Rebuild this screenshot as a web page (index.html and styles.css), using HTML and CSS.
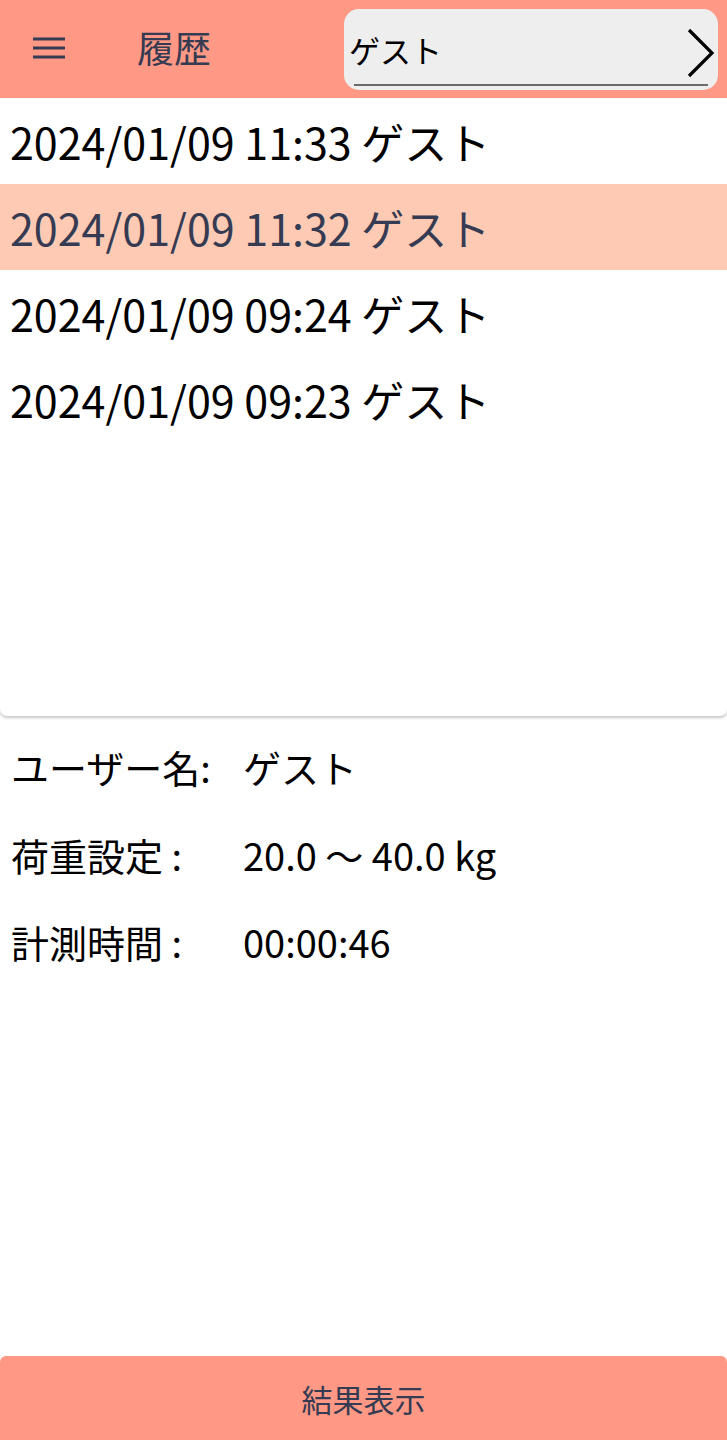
FILE: index.html
```html
<!DOCTYPE html>
<html lang="ja">
<head>
<meta charset="utf-8">
<link rel="stylesheet" href="styles.css">
</head>
<body>
<div class="app">
  <header class="topbar">
    <button class="menu" aria-label="menu">
      <svg width="34" height="24" viewBox="0 0 34 24"><path d="M1 3H33M1 12H33M1 21H33" stroke="#353b52" stroke-width="3" fill="none"/></svg>
    </button>
    <h1 class="title">履歴</h1>
    <div class="select">
      <span class="select-text">ゲスト</span>
      <svg class="chev" width="30" height="54" viewBox="0 0 30 54"><path d="M4 3L27 26L4 49" stroke="#000" stroke-width="3.2" fill="none"/></svg>
      <span class="underline"></span>
    </div>
  </header>
  <section class="history">
    <div class="row">2024/01/09 11:33 ゲスト</div>
    <div class="row selected">2024/01/09 11:32 ゲスト</div>
    <div class="row">2024/01/09 09:24 ゲスト</div>
    <div class="row">2024/01/09 09:23 ゲスト</div>
  </section>
  <section class="details">
    <div class="drow"><span class="label">ユーザー名:</span><span class="value">ゲスト</span></div>
    <div class="drow"><span class="label">荷重設定 :</span><span class="value">20.0 〜 40.0 kg</span></div>
    <div class="drow"><span class="label">計測時間 :</span><span class="value">00:00:46</span></div>
  </section>
  <div class="spacer"></div>
  <button class="result">結果表示</button>
</div>
</body>
</html>
```
FILE: styles.css
```css
* { box-sizing: border-box; }
html, body { margin: 0; padding: 0; }
body {
  font-family: "Noto Sans CJK JP", "Noto Sans", sans-serif;
  background: #fff;
  color: #000;
}
.app {
  width: 727px;
  height: 1440px;
  display: flex;
  flex-direction: column;
}
.topbar {
  height: 98px;
  background: #ff9985;
  display: flex;
  align-items: center;
  flex-shrink: 0;
}
.menu {
  border: 0;
  background: none;
  padding: 0;
  margin-left: 32px;
  width: 34px;
  height: 24px;
  display: flex;
  margin-top: -2px;
}
.title {
  margin: 0 0 0 71px;
  font-size: 37px;
  font-weight: 400;
  color: #353b52;
  line-height: 1;
  margin-top: -4px;
}
.select {
  margin-left: auto;
  margin-right: 9px;
  width: 374px;
  height: 81px;
  margin-top: 0;
  background: #eeeeee;
  border-radius: 15px;
  position: relative;
  display: flex;
  align-items: center;
  padding-left: 5px;
}
.select-text {
  font-size: 31px;
  color: #000;
  margin-top: 0;
}
.chev {
  position: absolute;
  right: 3px;
  top: 18px;
}
.underline {
  position: absolute;
  left: 10px;
  right: 10px;
  bottom: 4px;
  height: 2px;
  background: #6b6b6b;
}
.history {
  height: 618px;
  background: #fff;
  border-radius: 0 0 7px 7px;
  box-shadow: 0 2px 3px rgba(0,0,0,0.22);
  flex-shrink: 0;
  position: relative;
  z-index: 1;
}
.row {
  height: 86px;
  display: flex;
  align-items: center;
  padding-left: 10px;
  font-size: 43px;
  color: #000;
  white-space: nowrap;
  padding-top: 0;
}
.row.selected {
  background: #ffcab4;
  color: #353b52;
}
.details {
  padding-top: 7px;
}
.drow {
  height: 87.5px;
  display: flex;
  align-items: center;
  font-size: 38px;
}
.label {
  width: 243px;
  padding-left: 11px;
}
.value {
  flex: 1;
}
.spacer { flex: 1; }
.result {
  height: 84px;
  border: 0;
  background: #ff9985;
  border-radius: 6px 6px 0 0;
  font-family: inherit;
  font-size: 31px;
  color: #353b52;
  flex-shrink: 0;
  padding: 0;
}
```
